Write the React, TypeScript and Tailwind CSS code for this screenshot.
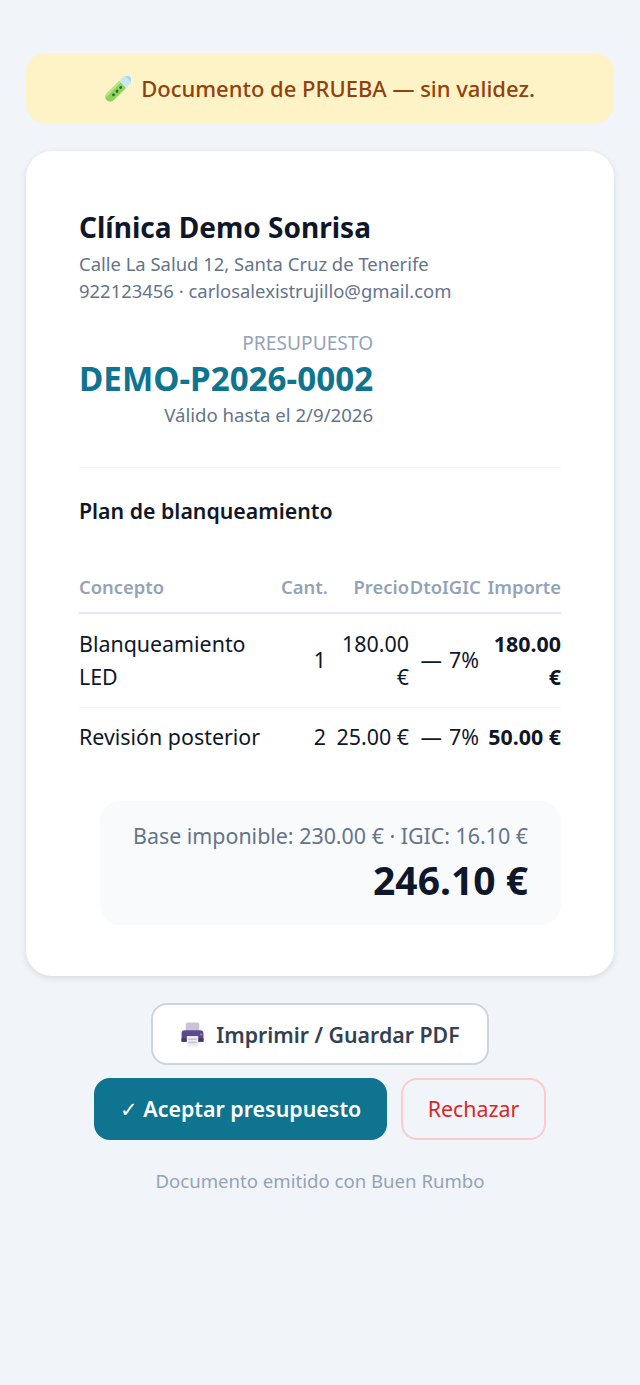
const font = { fontFamily: '"Noto Sans", sans-serif' };

function TestTube() {
  return (
    <svg viewBox="3 3 18 18" className="h-[26px] w-[26px] shrink-0">
      <g transform="rotate(45 12 12)">
        <rect x="7.9" y="0.2" width="8.2" height="2.2" rx="0.8" fill="#9fd8f2" />
        <path d="M8.6 2.2h6.8v5.3H8.6z" fill="#c9e8f7" />
        <path d="M8.6 7.5h6.8v12.2a3.4 3.4 0 0 1-6.8 0z" fill="#8fd45a" />
        <path d="M8.6 7.5h1.6v15a3.4 3.4 0 0 1-1.6-2.8z" fill="#b4e58a" />
        <circle cx="12.6" cy="10" r="1" fill="#2f6b2a" />
        <circle cx="12.6" cy="13.5" r="1" fill="#2f6b2a" />
        <circle cx="12.6" cy="17" r="1" fill="#2f6b2a" />
      </g>
    </svg>
  );
}

function Printer() {
  return (
    <svg viewBox="0 0 24 24" className="h-[25px] w-[25px] shrink-0">
      <rect x="5.5" y="0.5" width="13" height="9" rx="2" fill="#c9c3d8" />
      <path d="M1.5 11a3 3 0 0 1 3-3h15a3 3 0 0 1 3 3v8h-21z" fill="#5b4a8c" />
      <rect x="1.5" y="15.5" width="21" height="3.5" fill="#43366e" />
      <rect x="19.5" y="11" width="2" height="2" fill="#d9668c" />
      <rect x="6.5" y="13.5" width="11" height="10" rx="0.8" fill="#eceaf2" />
      <rect x="8" y="16" width="8" height="1" fill="#b9b4c8" />
      <rect x="8" y="19" width="8" height="1" fill="#b9b4c8" />
    </svg>
  );
}

const rows = [
  { name: "Blanqueamiento LED", qty: "1", price: "180.00 €", total: "180.00 €", pad: "pt-[12.5px] pb-[14.5px]" },
  { name: "Revisión posterior", qty: "2", price: "25.00 €", total: "50.00 €", pad: "pt-[11.5px] pb-[15.5px]" },
];

export default function App() {
  return (
    <main className="min-h-[1385px] bg-[#f1f5f9] px-[26px] pt-[53px]" style={font}>
      <div className="flex h-[71px] items-center justify-center gap-[10px] rounded-[20px] bg-[#fef3c7] text-[22px] font-medium text-[#92400e]">
        <TestTube />
        <span>Documento de PRUEBA — sin validez.</span>
      </div>

      <section className="mt-[27px] h-[825px] rounded-[26px] bg-white px-[53px] pt-[57px] shadow-[0_2px_6px_rgba(15,23,42,0.12)]">
        <h1 className="text-[28px] leading-[38px] font-bold text-[#0f172a]">Clínica Demo Sonrisa</h1>
        <p className="mt-[4px] text-[18.45px] leading-[27px] text-[#64748b]">
          Calle La Salud 12, Santa Cruz de Tenerife
          <br />
          922123456 · carlosalexistrujillo@gmail.com
        </p>

        <div className="mt-[25px] w-fit text-right">
          <div className="text-[19.2px] leading-[27px] text-[#94a3b8]">PRESUPUESTO</div>
          <div className="text-[33.2px] leading-[46px] font-bold text-[#0e7490]">DEMO-P2026-0002</div>
          <div className="-mt-[1px] text-[18.6px] leading-[27px] text-[#64748b]">Válido hasta el 2/9/2026</div>
        </div>

        <div className="mt-[39px] h-px bg-[#f1f5f9]" />

        <h2 className="mt-[26px] text-[21.3px] leading-[34px] font-semibold text-[#0f172a]">Plan de blanqueamiento</h2>

        <table className="mt-[42px] w-full table-fixed border-collapse text-[21.4px] leading-[33px] text-[#0f172a]">
          <colgroup>
            <col className="w-[202px]" />
            <col className="w-[45px]" />
            <col className="w-[83px]" />
            <col className="w-[33px]" />
            <col className="w-[37px]" />
            <col className="w-[82px]" />
          </colgroup>
          <thead>
            <tr className="border-b-2 border-[#e2e8f0] text-[18.4px] text-[#94a3b8]">
              <th className="pb-[9px] text-left font-semibold">Concepto</th>
              <th className="pb-[9px] text-right font-semibold">Cant.</th>
              <th className="pb-[9px] text-right font-semibold">Precio</th>
              <th className="pb-[9px] text-right font-semibold">Dto</th>
              <th className="pb-[9px] text-right font-semibold">IGIC</th>
              <th className="pb-[9px] text-right font-semibold whitespace-nowrap">Importe</th>
            </tr>
          </thead>
          <tbody>
            {rows.map((r, i) => (
              <tr key={r.name} className={i === 0 ? "border-b border-[#f1f5f9]" : ""}>
                <td className={r.pad}>{r.name}</td>
                <td className={`${r.pad} text-right`}>{r.qty}</td>
                <td className={`${r.pad} text-right`}>{r.price}</td>
                <td className={`${r.pad} text-right`}>—</td>
                <td className={`${r.pad} text-right`}>7%</td>
                <td className={`${r.pad} text-right font-bold`}>{r.total}</td>
              </tr>
            ))}
          </tbody>
        </table>

        <div className="mt-[33px] ml-[21px] h-[124px] rounded-[20px] bg-[#f8fafc] px-[33px] pt-[19px] text-right">
          <div className="text-[21.4px] leading-[31px] whitespace-nowrap text-[#64748b]">Base imponible: 230.00 € · IGIC: 16.10 €</div>
          <div className="text-[39px] leading-[58px] font-bold text-[#0f172a]">246.10 €</div>
        </div>
      </section>

      <div className="mt-[27px] flex justify-center">
        <button className="flex h-[62px] w-[338px] items-center justify-center gap-[11px] rounded-[16px] border-2 border-[#cbd5e1] bg-white pt-[1px] text-[21.3px] font-semibold text-[#334155]">
          <Printer />
          Imprimir / Guardar PDF
        </button>
      </div>

      <div className="mt-[13px] flex justify-center gap-[14px]">
        <button className="h-[62px] w-[293px] rounded-[16px] bg-[#0e7490] pt-[1px] text-[21.4px] font-semibold text-white">
          <span className="font-normal">✓</span> Aceptar presupuesto
        </button>
        <button className="h-[62px] w-[145px] rounded-[16px] border-2 border-[#fecaca] pt-[1px] text-[21.4px] font-normal text-[#dc2626]">
          Rechazar
        </button>
      </div>

      <p className="mt-[27px] text-center text-[18.6px] leading-[27px] text-[#94a3b8]">Documento emitido con Buen Rumbo</p>
    </main>
  );
}
